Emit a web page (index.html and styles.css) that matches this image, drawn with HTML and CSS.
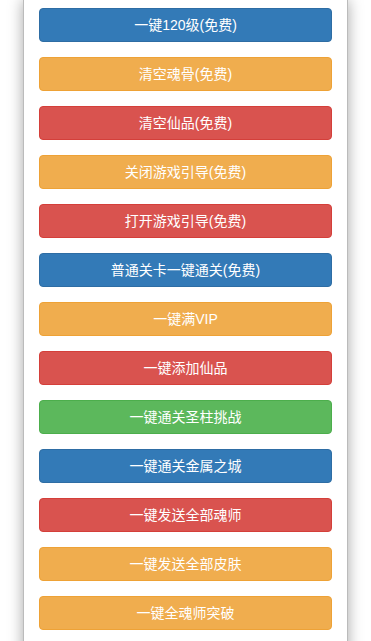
FILE: index.html
```html
<!DOCTYPE html>
<html lang="zh-CN">
<head>
    <meta charset="UTF-8" />
    <title>工具</title>
    <link rel="stylesheet" href="styles.css">
</head>
<body>
    <div class="panel">
        <button class="btn btn-primary">一键120级(免费)</button>
        <button class="btn btn-warning">清空魂骨(免费)</button>
        <button class="btn btn-danger">清空仙品(免费)</button>
        <button class="btn btn-warning">关闭游戏引导(免费)</button>
        <button class="btn btn-danger">打开游戏引导(免费)</button>
        <button class="btn btn-primary">普通关卡一键通关(免费)</button>
        <button class="btn btn-warning">一键满VIP</button>
        <button class="btn btn-danger">一键添加仙品</button>
        <button class="btn btn-success">一键通关圣柱挑战</button>
        <button class="btn btn-primary">一键通关金属之城</button>
        <button class="btn btn-danger">一键发送全部魂师</button>
        <button class="btn btn-warning">一键发送全部皮肤</button>
        <button class="btn btn-warning">一键全魂师突破</button>
    </div>
</body>
</html>
```

FILE: styles.css
```css
body {
    margin: 0;
    padding: 0;
    background: #ffffff;
    font-family: "Liberation Sans", "Noto Sans CJK SC", sans-serif;
    overflow: hidden;
}

.panel {
    width: 325px;
    margin: 0 auto;
    padding: 8px 15px 40px;
    box-sizing: border-box;
    background: #ffffff;
    border-left: 1px solid #bbbbbb;
    border-right: 1px solid #bbbbbb;
    box-shadow: 0 0 14px rgba(0, 0, 0, 0.35);
    display: flex;
    flex-direction: column;
    gap: 15px;
}

.btn {
    display: block;
    width: 100%;
    height: 34px;
    padding: 6px 12px;
    border: 1px solid transparent;
    border-radius: 4px;
    color: #ffffff;
    font-family: inherit;
    font-size: 14px;
    line-height: 20px;
    text-align: center;
    cursor: pointer;
}

.btn-primary {
    background-color: #337ab7;
    border-color: #2e6da4;
}

.btn-warning {
    background-color: #f0ad4e;
    border-color: #eea236;
}

.btn-danger {
    background-color: #d9534f;
    border-color: #d43f3a;
}

.btn-success {
    background-color: #5cb85c;
    border-color: #4cae4c;
}
```
